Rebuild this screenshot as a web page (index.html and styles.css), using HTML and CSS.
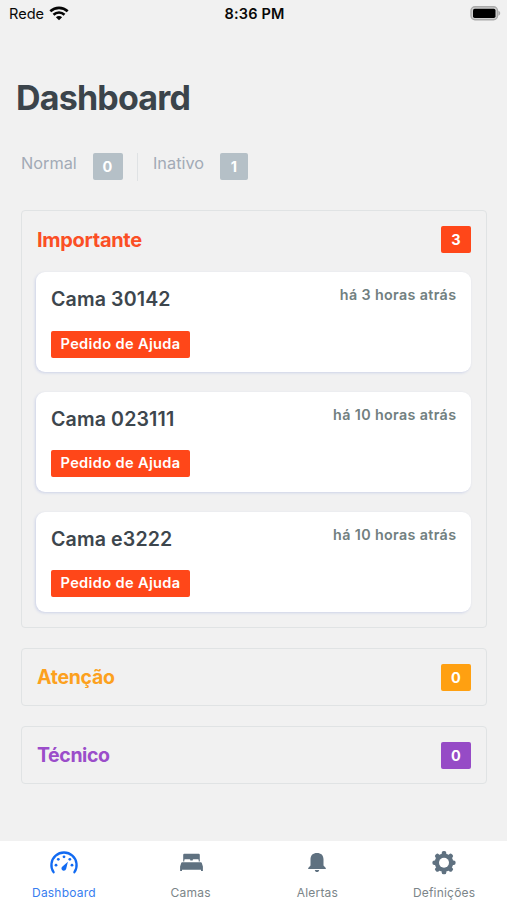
FILE: index.html
```html
<!DOCTYPE html>
<html lang="pt">
<head>
<meta charset="utf-8">
<title>Dashboard</title>
<link rel="stylesheet" href="styles.css">
</head>
<body>
<div class="screen">
  <header class="status">
    <div class="carrier"><span>Rede</span>
      <svg width="20" height="15" viewBox="0 0 20 15" fill="none" stroke="#050505" stroke-width="2.6"><path d="M1.3 5.3C6.2.7 13.8.7 18.7 5.3"/><path d="M4.5 8.7c3.1-2.9 7.9-2.9 11 0"/><path d="M10 14.3 6.9 11.2c1.7-1.7 4.5-1.7 6.2 0z" fill="#050505" stroke="none"/></svg>
    </div>
    <div class="clock">8:36 PM</div>
    <svg class="battery" width="31" height="15" viewBox="0 0 31 15"><rect x="1" y=".8" width="26.5" height="13" rx="4" fill="#d0d0d0" stroke="#aaa" stroke-width="1.4"/><rect x="3" y="2.7" width="22.5" height="9.2" rx="1.7" fill="#000"/><path d="M28.4 4.8c2.4.7 2.4 4.3 0 5z" fill="#aaa"/></svg>
  </header>
  <main>
    <h1>Dashboard</h1>
    <div class="summary">
      <span class="label normal">Normal</span><b class="badge gray">0</b>
      <i class="divider"></i>
      <span class="label inactive">Inativo</span><b class="badge gray small">1</b>
    </div>
    <section class="group important">
      <div class="head"><h2>Importante</h2><b class="badge">3</b></div>
      <article class="card"><div class="row"><h3>Cama 30142</h3><time>há 3 horas atrás</time></div><span class="tag">Pedido de Ajuda</span></article>
      <article class="card"><div class="row"><h3>Cama 023111</h3><time>há 10 horas atrás</time></div><span class="tag">Pedido de Ajuda</span></article>
      <article class="card"><div class="row"><h3>Cama e3222</h3><time>há 10 horas atrás</time></div><span class="tag">Pedido de Ajuda</span></article>
    </section>
    <section class="group attention"><div class="head"><h2>Atenção</h2><b class="badge">0</b></div></section>
    <section class="group technical"><div class="head"><h2>Técnico</h2><b class="badge">0</b></div></section>
  </main>
  <nav>
    <a class="active">
      <svg width="30" height="26" viewBox="0 0 30 26" fill="currentColor"><path d="M4.600 22.200A12.600 12.600 0 1 1 25.400 22.200" fill="none" stroke="currentColor" stroke-width="2.300" stroke-linecap="round"/><circle cx="7" cy="15.200" r="1.400"/><circle cx="9.300" cy="9.300" r="1.400"/><circle cx="15" cy="6.800" r="1.400"/><circle cx="20.800" cy="9.300" r="1.400"/><circle cx="23" cy="15.200" r="1.400"/><path d="M18.900 11.800 13.200 16.800c-1.500 1.500-.4 4 1.600 3.900 1.200 0 2-.8 2.400-2z"/></svg>
      <span>Dashboard</span></a>
    <a>
      <svg width="30" height="26" viewBox="0 0 30 26" fill="currentColor"><path d="M7.200 11.400V4.900q0-1.100 1.100-1.100h14.400q1.100 0 1.100 1.100v6.500h-1.100V10q0-.7-.7-.7h-4.600q-.7 0-.7.700v.5h-2.400V10q0-.7-.7-.7H9q-.7 0-.7.700v1.400z"/><path d="M6.100 12.200h18.800q.7 0 .9.700l1.100 3.700v4.500h-1.900v-1.300H6v1.300H4.100v-4.500l1.100-3.700q.2-.7.900-.7z"/></svg>
      <span>Camas</span></a>
    <a>
      <svg width="30" height="26" viewBox="0 0 30 26" fill="currentColor"><path d="M6.200 19v-1.100l2.300-2.300V9.300C8.500 5.100 11 2.900 15 2.900s6.500 2.200 6.500 6.400v6.300l2.300 2.300V19z"/><path d="M12.800 20h4.400c-.3 2.700-4.100 2.700-4.400 0z"/></svg>
      <span>Alertas</span></a>
    <a>
      <svg width="30" height="26" viewBox="0 0 30 26"><g fill="currentColor" transform="translate(15 12.700)"><rect x="-2.300" y="-11.600" width="4.600" height="23.200" rx="1.900"/><rect x="-2.300" y="-11.600" width="4.600" height="23.200" rx="1.900" transform="rotate(45)"/><rect x="-2.300" y="-11.600" width="4.600" height="23.200" rx="1.900" transform="rotate(90)"/><rect x="-2.300" y="-11.600" width="4.600" height="23.200" rx="1.900" transform="rotate(135)"/><circle r="9.300"/><circle r="5" fill="#fff"/></g></svg>
      <span>Definições</span></a>
  </nav>
</div>
</body>
</html>
```
FILE: styles.css
```css
* { box-sizing: border-box; }
body { margin: 0; font-family: Inter, "Liberation Sans", sans-serif; background: #f1f1f1; }
h1, h2, h3 { margin: 0; }
.screen { height: 900px; display: flex; flex-direction: column; overflow: hidden; }
.status { height: 28px; display: grid; grid-template-columns: 1fr auto 1fr; padding: 0 7px 0 9px; align-items: center; color: #080808; font-size: 14.6px; }
.carrier { display: flex; gap: 5px; align-items: center; height: 20px; }
.carrier svg { margin-top: -2px; }
.clock { margin-top: -1px; font-weight: 600; font-size: 14.5px; letter-spacing: .15px; }
.battery { justify-self: end; margin: -2px -1px 0 0; }
main { flex: 1; padding: 0 20px 0 21px; }
h1 { margin: 49px 0 0 -5px; font-size: 34px; line-height: 42px; letter-spacing: -.8px; color: #3b444b; }
.summary { display: flex; height: 28px; margin-top: 34px; }
.label { color: #a2aab6; font-size: 16.300px; line-height: 21px; }
.normal { width: 71.500px; }
.inactive { width: 67px; }
.badge { width: 30px; height: 27px; border-radius: 2px; color: #fff; font-size: 14.5px; line-height: 27px; text-align: center; }
.gray { background: #b5c0c7; }
.small { width: 28px; }
.divider { width: 1px; margin: 0 15px 0 14.500px; background: #dfe2e4; }
.group { border: 1px solid #e0e3e4; border-radius: 4px; padding: 15px 15px 15px 14px; margin: 0 0 20px; }
.summary + .group { margin-top: 29px; height: 417.500px; }
.head { display: flex; justify-content: space-between; align-items: center; height: 27px; }
h2 { margin: 1px 0 0 1px; font-size: 20px; line-height: 27px; letter-spacing: -.3px; }
.important h2 { color: #fb4f25; }
.attention h2 { color: #fca11e; font-size: 19.500px; }
.technical h2 { color: #9b4dca; font-size: 19.500px; letter-spacing: -.4px; }
.important .badge { background: #ff4719; }
.attention .badge { background: #ffa011; }
.technical .badge { background: #964bc6; }
.attention, .technical { height: 58.300px; }
.card { height: 100px; margin-top: 19.700px; padding: 15px; border-radius: 9px; background: #fff; box-shadow: -1px 1px 3px #cdd3e8; }
.head + .card { margin-top: 19.400px; }
.row { display: flex; justify-content: space-between; height: 43.300px; }
h3 { font-size: 19.600px; font-weight: 600; line-height: 25px; letter-spacing: .12px; color: #3d464d; }
time { font-size: 14.300px; font-weight: 600; line-height: 18px; letter-spacing: .36px; margin: -1px -.4px 0 0; color: #71807f; }
.tag { display: block; width: 139px; height: 27px; border-radius: 2px; background: #ff4719; color: #fff; font-size: 14.600px; font-weight: 600; line-height: 27px; letter-spacing: .35px; text-align: center; }
nav { height: 59px; background: #fff; display: grid; grid-template-columns: repeat(4, 1fr); }
nav a { display: flex; flex-direction: column; align-items: center; padding: 9px 0 0 1px; color: #5f7180; }
nav span { margin-top: 8.500px; font-size: 12px; line-height: 16px; letter-spacing: .2px; color: #7b8589; }
nav .active { color: #126bf2; }
.active span { color: #377ef0; }
```
